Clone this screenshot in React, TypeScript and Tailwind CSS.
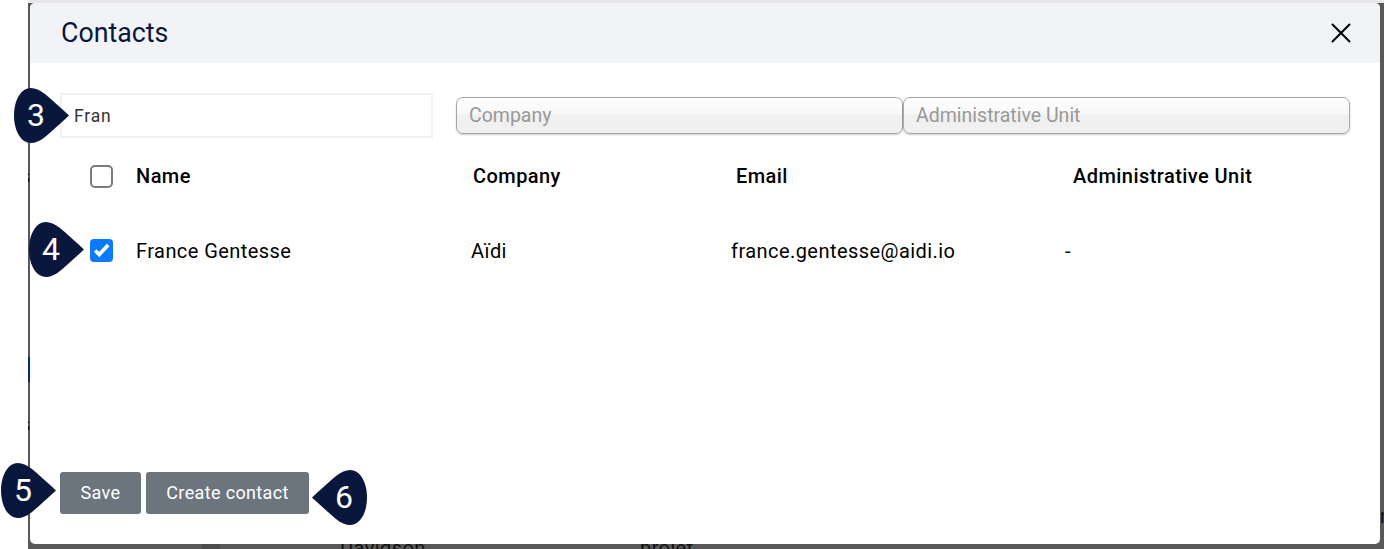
import React from 'react';
import { X } from 'lucide-react';

const Marker = ({ n, flip, className }: { n: number; flip?: boolean; className: string }) => (
  <div className={`absolute z-20 w-[55px] h-[55px] ${className}`}>
    <svg viewBox="0 0 55 55" className={`w-full h-full ${flip ? '-scale-x-100' : ''}`}>
      <path
        d="M55 27.5C47 20 38 12 31 6C26 2 21 0 17 0C7 0 0 12 0 27.5C0 43 7 55 17 55C21 55 26 53 31 49C38 43 47 35 55 27.5Z"
        fill="#0a173d"
      />
    </svg>
    <span
      className={`absolute top-0 h-full flex items-center pb-[2px] text-white text-[32px] font-normal ${flip ? 'left-[23px]' : 'left-[13px]'}`}
    >
      {n}
    </span>
  </div>
);

const FilterSelect = ({ label }: { label: string }) => (
  <div className="w-[447px] h-[37px] flex items-center pl-[12px] pt-[1px] rounded-[7px] border border-[#a6a6a6] shadow-[0_1px_2px_rgba(0,0,0,0.2)] bg-gradient-to-b from-white from-0% via-[#f8f8f8] via-45% to-[#f0f0f0] to-50% text-[19.5px] text-[#999999]">
    {label}
  </div>
);

export default function App() {
  return (
    <div className="relative flex h-screen w-full overflow-hidden bg-white font-['Roboto',sans-serif]">
      <div className="w-[28px] shrink-0 bg-white" />

      {/* page behind the dialog */}
      <div className="relative flex-1 flex overflow-hidden border-t-[3px] border-[#e8e8e8] bg-[#595959] pl-[2px] pr-[4px] pb-[5px]">
        <span className="absolute left-[312px] top-[530px] text-[20px] tracking-[0.4px] text-[#111]">Davidson</span>
        <span className="absolute left-[612px] top-[530px] text-[20px] tracking-[0.4px] text-[#111]">projet</span>
        <span className="absolute left-[-8px] top-[158px] text-[20px] text-[#111]">s</span>
        <span className="absolute left-[-8px] top-[406px] text-[20px] text-[#111]">s</span>
        <span className="absolute right-[-7px] top-[498px] text-[20px] text-[#111]">n</span>
        <div className="absolute left-0 top-[354px] w-[2px] h-[25px] bg-[#0b2a6b]" />
        <div className="absolute left-[174px] top-[541px] w-[18px] h-[5px] bg-[#4d4d4d]" />

        {/* dialog */}
        <div className="relative z-10 flex-1 flex flex-col rounded-[5px] bg-white overflow-hidden">
          <div className="h-[60px] shrink-0 flex items-center justify-between pl-[31px] pr-[22px] bg-[#f1f3f7]">
            <h2 className="text-[26.75px] text-[#0a173d]">Contacts</h2>
            <X className="w-[34px] h-[34px] text-black" strokeWidth={1.4} />
          </div>

          <div className="flex-1 flex flex-col pl-[30px] pr-[30px]">
            <div className="flex items-center mt-[30px]">
              <div className="w-[373px] h-[45px] flex items-center pl-[12px] pt-[1px] border-2 border-[#f1f1f1] text-[17.5px] text-[#333] tracking-[0.8px]">
                Fran
              </div>
              <div className="ml-[23px] flex">
                <FilterSelect label="Company" />
                <FilterSelect label="Administrative Unit" />
              </div>
            </div>

            <div className="flex items-center mt-[26px] h-[24px] text-[20px] font-medium tracking-[0.44px] text-black">
              <div className="w-[76px] pl-[30px] shrink-0">
                <div className="w-[23px] h-[23px] rounded-[5px] border-2 border-[#7b7b7b] bg-white" />
              </div>
              <div className="w-[337px]">Name</div>
              <div className="w-[263px]">Company</div>
              <div className="w-[337px]">Email</div>
              <div>Administrative Unit</div>
            </div>

            <div className="flex items-center mt-[51px] h-[24px] text-[20px] tracking-[0.44px] text-black">
              <div className="w-[76px] pl-[30px] shrink-0">
                <div className="w-[23px] h-[23px] -translate-y-px rounded-[4px] bg-[#0a7bff]">
                  <svg viewBox="0 0 20 20" className="w-full h-full">
                    <path d="M4.5 10L8 13.5L15.8 5.2" fill="none" stroke="white" strokeWidth="3.2" />
                  </svg>
                </div>
              </div>
              <div className="w-[335px]">France Gentesse</div>
              <div className="w-[260px]">Aïdi</div>
              <div className="w-[334px]">france.gentesse@aidi.io</div>
              <div>-</div>
            </div>

            <div className="mt-auto mb-[30px] flex gap-[5px]">
              <button className="w-[81px] h-[42px] pb-[1px] rounded-[3px] bg-[#6c757d] text-white text-[18px] tracking-[0.35px]">Save</button>
              <button className="w-[163px] h-[42px] pb-[1px] rounded-[3px] bg-[#6c757d] text-white text-[18px] tracking-[0.35px]">Create contact</button>
            </div>
          </div>
        </div>
      </div>

      <Marker n={3} className="left-[14px] top-[88px]" />
      <Marker n={4} className="left-[29px] top-[222px]" />
      <Marker n={5} className="left-[1px] top-[463px]" />
      <Marker n={6} flip className="left-[312px] top-[470px]" />
    </div>
  );
}
